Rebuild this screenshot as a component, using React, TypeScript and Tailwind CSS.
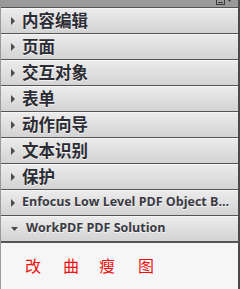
import React from "react";

const rows = ["内容编辑", "页面", "交互对象", "表单", "动作向导", "文本识别", "保护"];

function Arrow({ open }: { open?: boolean }) {
  if (open) {
    return (
      <svg width="7" height="4" viewBox="0 0 7 4" className="mr-[8px] ml-[10px]">
        <path d="M0 0H7L3.5 4Z" fill="#4a4a4a" />
      </svg>
    );
  }
  return (
    <svg width="4" height="8" viewBox="0 0 4 8" className="mr-[7px] ml-[10px]">
      <path d="M0 0L4 4L0 8Z" fill="#4a4a4a" />
    </svg>
  );
}

function Row({ label, latin, open }: { label: string; latin?: boolean; open?: boolean }) {
  return (
    <div className="flex h-[26px] items-center border-t border-[#555] bg-gradient-to-b from-[#ececec] to-[#d3d3d3] shadow-[inset_0_1px_0_#f6f6f6]">
      <Arrow open={open} />
      <span
        className={
          latin
            ? "truncate text-[12.5px] font-bold text-[#3a3a44] [font-family:'Open_Sans',sans-serif]"
            : "text-[16.5px] font-bold text-[#2c2c34] [font-family:'Noto_Sans_CJK_SC',sans-serif] leading-none"
        }
        style={{ textShadow: "0 1px 0 rgba(255,255,255,0.7)" }}
      >
        {label}
      </span>
    </div>
  );
}

export default function App() {
  return (
    <div className="h-[289px] w-[240px] overflow-hidden border-r-2 border-[#4a4a4a] bg-[#f4f4f4]">
      <div className="flex h-[7px] items-start justify-end bg-[#9a9a9a] pr-[6px]">
        <svg width="16" height="6" viewBox="0 0 16 6">
          <rect x="0.5" y="-1" width="8" height="5.5" fill="none" stroke="#3a3a3a" />
          <path d="M2 2.5H7" stroke="#3a3a3a" />
          <path d="M12 0L15 0L13.5 2Z" fill="#3a3a3a" />
        </svg>
      </div>
      <div className="border-l border-[#9a9a9a]">
        {rows.map((r) => (
          <Row key={r} label={r} />
        ))}
        <Row label="Enfocus Low Level PDF Object B..." latin />
        <Row label="WorkPDF PDF Solution" latin open />
        <div className="flex h-[48px] items-center border-t-2 border-[#555] bg-[#f6f6f6] pl-[24px] pb-[2px] text-[16px] text-[#ee1111] [font-family:'Noto_Sans_CJK_SC',serif]">
          <span className="w-[38px]">改</span>
          <span className="w-[36px]">曲</span>
          <span className="w-[39px]">瘦</span>
          <span>图</span>
        </div>
      </div>
    </div>
  );
}
